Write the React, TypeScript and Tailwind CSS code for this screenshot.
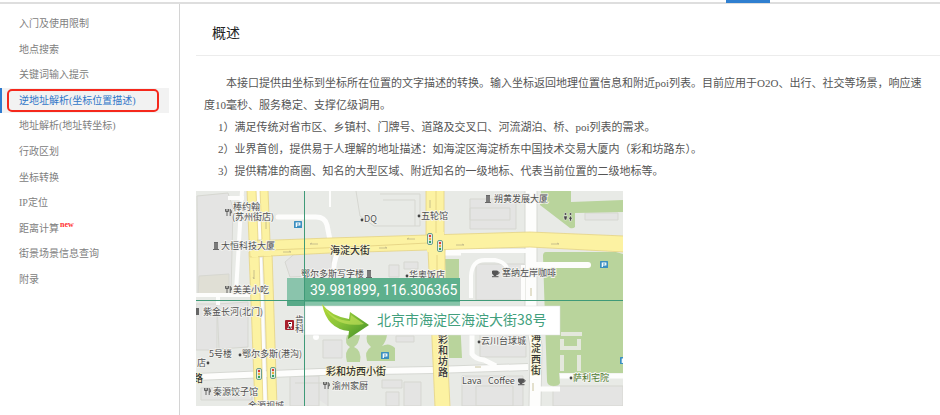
type NavItem = { label: string; isNew?: boolean };

const navItems: NavItem[] = [
  { label: "入门及使用限制" },
  { label: "地点搜索" },
  { label: "关键词输入提示" },
  { label: "逆地址解析(坐标位置描述)" },
  { label: "地址解析(地址转坐标)" },
  { label: "行政区划" },
  { label: "坐标转换" },
  { label: "IP定位" },
  { label: "距离计算", isNew: true },
  { label: "街景场景信息查询" },
  { label: "附录" },
];

const activeLabel = "逆地址解析(坐标位置描述)";

function Sidebar() {
  return (
    <nav aria-label="目录" className="w-[180px] shrink-0 border-r border-[#d4d4d4] pt-[7px]">
      <ul className="grid h-[281px] auto-rows-fr text-[10px] text-[#808080]">
        {navItems.map((item) =>
          item.label === activeLabel ? (
            <li key={item.label} className="relative mr-2.5 flex border-l-2 border-[#2f7bd0] bg-[#f2f2f2]">
              <a href="#geocoder" aria-current="page" className="flex flex-1 items-center pl-[17px] text-[#2f76c8]">
                {item.label}
              </a>
              <span className="pointer-events-none absolute inset-y-px left-[5px] right-2.5 rounded-[5px] border-2 border-[#f5281c]" />
            </li>
          ) : (
            <li key={item.label} className="flex">
              <a href="#section" className="flex flex-1 items-center pl-[19px]">
                {item.label}
                {item.isNew && (
                  <sup className="top-0 mb-1.5 ml-px text-[8px] font-bold leading-none text-[#ff3030]">new</sup>
                )}
              </a>
            </li>
          ),
        )}
      </ul>
    </nav>
  );
}

type MapLabel = [text: string, x: number, y: number];

const placeLabels: MapLabel[] = [
  ["棒约翰", 233, 210],
  ["(苏州街店)", 232, 220],
  ["大恒科技大厦", 221, 249],
  ["美美小吃", 233, 293],
  ["DQ", 364, 222],
  ["五轮馆", 421, 219],
  ["朔黄发展大厦", 494, 202],
  ["塞纳左岸咖啡", 502, 276],
  ["鄂尔多斯写字楼", 301, 277],
  ["华奥饭店", 409, 278],
  ["紫金长河(北门)", 203, 315],
  ["肯", 295, 323],
  ["科", 295, 332],
  ["5号楼", 209, 357],
  ["鄂尔多斯(港沟)", 242, 357],
  ["店", 197, 366],
  ["秦源饺子馆", 213, 395],
  ["金源视城", 248, 409],
  ["渝州家厨", 332, 389],
  ["云川台球城", 481, 344],
  ["Lava", 462, 384],
  ["Coffee", 488, 384],
];

const placeDots: [number, number][] = [
  [362, 220],
  [419, 216],
  [407, 276],
  [240, 355],
  [208, 363],
  [479, 342],
  [571, 378],
];

const verticalStreets: { chars: string; x: number; y: number; step: number }[] = [
  { chars: "彩和坊路", x: 438, y: 343, step: 11 },
  { chars: "海淀西街", x: 531, y: 341, step: 11 },
];

function Parking({ x, y }: { x: number; y: number }) {
  return (
    <g transform={`translate(${x} ${y})`}>
      <rect width="8" height="7" rx="0.5" fill="#3a8fc0" />
      <path d="M2.3 6V2h3.5v2H2.5" fill="none" stroke="#fff" strokeWidth="1.2" />
    </g>
  );
}

function TrafficLight({ x, y }: { x: number; y: number }) {
  return (
    <g transform={`translate(${x} ${y})`}>
      <rect x="0.5" y="0.5" width="5" height="11" rx="1.5" fill="#eef3ef" stroke="#6fa08c" />
      <circle cx="3" cy="3" r="1.2" fill="#d93a30" />
      <circle cx="3" cy="6" r="1.2" fill="#e8b23a" />
      <circle cx="3" cy="9" r="1.2" fill="#2fa05a" />
    </g>
  );
}

function Fork({ x, y }: { x: number; y: number }) {
  return (
    <path
      transform={`translate(${x} ${y})`}
      d="M0.5 0v2.5h3V0M2 0v7M5.2 7V0.4Q6.8 1.5 6.3 4H5.2"
      fill="none"
      stroke="#555"
      strokeWidth="0.9"
    />
  );
}

function Tower({ x, y }: { x: number; y: number }) {
  return (
    <g transform={`translate(${x} ${y})`}>
      <path d="M1 0h4v7h1v1H0V7h1z" fill="#666" />
      <path d="M1 2h4M1 4h4M1 6h4" stroke="#bbb" strokeWidth="0.5" />
    </g>
  );
}

function Cup({ x, y }: { x: number; y: number }) {
  return (
    <g transform={`translate(${x} ${y})`} fill="none" stroke="#555">
      <path d="M0.5 0h5v2.5L4 4.5H2L0.5 2.5z" fill="#555" />
      <path d="M5.5 1H7v1.5L5 3.5M0 5.7h6.5" />
    </g>
  );
}

function LocationMap() {
  return (
    <svg
      role="img"
      aria-label="北京市海淀区海淀大街38号"
      viewBox="196 191 427 215"
      className="block aspect-[427/215] w-full max-w-[427px]"
      fontFamily="'Noto Sans CJK SC', sans-serif"
    >
      <rect x="196" y="191" width="427" height="215" fill="#e8eae6" />

      {/* building blocks */}
      <g fill="#e4e4e3" stroke="#d6d7d1" strokeWidth="1">
        <path d="M197 196l31-3 5 15-2 86-33 2z" />
        <path d="M199 276l30-2v19l-31 3z" fill="#e0dfd5" />
        <path d="M217 304l31-2v45l-29 2zM196 304h21v46h-21zM201 388h51v12h-51z" />
        <path d="M356 191l4 25 14 10h46v-32H380M383 200h32v26" fill="none" />
        <path d="M470 199h46v30h-46zM470 208h40v12h-40zM585 213h33v7h-33z" />
        <path d="M285 262l14-12h33v25l-42 2zM389 265h10v12h-10zM404 262h14v7h-14z" />
        <path d="M323 340h19v18h-19zM290 376h29v30h-29zM295 383h33v23M382 380h20v8h-20zM404 382h17v24h-17zM386 392h13v14h-13z" />
        <path d="M396 336h18v6h-18zM462 376h61v30h-61zM476 386h37v20h-37zM480 320h46v37h-46zM553 386h70v20h-70zM476 264h48v36h-48z" />
      </g>

      {/* parks */}
      <g fill="#b9d49c">
        <path d="M541 191h30v11l52-2v12l-48 1v14q-2 2-5 1l-30-23z" />
        <path d="M546 252h70l7 2v119h-64l1 10q-1 3-6 3-7 0-7-5l-4-125q0-4 3-4z" />
        <path d="M445 259h14v41l3 58h-13z" />
        <path d="M347 335h13q-1 9-6 12 8 3 6 15h-13q-3-11 3-15-6-3-3-12z" />
        <path d="M367 335h20q-1 7-5 11 7-4 13 2v13h-28q-3-10 4-14-6-5-4-12z" />
      </g>

      {/* minor roads */}
      <g fill="none" stroke="#d6d8d3">
        <path d="M196 377L320 372 433 370 528 367" strokeWidth="8" />
        <path d="M531 191v125l5 30-1 60" strokeWidth="13" />
      </g>
      <g fill="none" stroke="#fdfdfc">
        <path d="M196 377L320 372 433 370 528 367" strokeWidth="6" />
        <path d="M531 191v125l5 30-1 60" strokeWidth="11" />
        <path d="M242 191l-6 101M228 198h16M196 295h54M218 295v10" strokeWidth="4" />
        <path d="M278 217h38q9 0 11 8l3 15" strokeWidth="5" strokeLinecap="round" />
        <path d="M340 248q-8 14-6 30" strokeWidth="5" />
        <path d="M330 191v16" strokeWidth="2" />
        <path d="M536 265h52" strokeWidth="6" strokeLinecap="round" />
        <path d="M446 251h84M471 298v-22q1-16 14-16h10q10 2 12 8M523 300v-35" strokeWidth="4" />
        <path d="M472 334v20q3 5 12 6l12 6M445 253h16" strokeWidth="5" />
        <path d="M442 191v42" strokeWidth="2" />
        <path d="M258 258l5 148M256 191l4 48" strokeWidth="8" />
        <path d="M560 376h63M540 389h20" strokeWidth="5" />
      </g>
      <path
        d="M561 334h21M562 339v9h17v-9M562 355v16M579 355v16"
        fill="none"
        stroke="#e4e8dc"
        strokeWidth="4"
      />
      <circle cx="316" cy="337" r="3" fill="#fff" />

      {/* main roads */}
      <g fill="#fcf2a2" stroke="#e4d384" strokeWidth="0.8">
        <path d="M247 190h9l2 50h-9zM249 252h10l4 155h-8l-4-105z" />
        <path d="M260 190h8l2 51h-8zM263 252h9l5 155h-9l-3-105z" />
        <path d="M426 190h18v45h-18zM428 249h17v52l5 106h-15z" />
        <path d="M249 241L330 238 428 235 530 232 624 236V252L530 247 428 250 330 253 250 257z" />
      </g>
      <g fill="#fcf2a2">
        <path d="M250 239h7v6h-7zM262 239h7v6h-7zM427 232h17v20h-17zM252 251h6v6h-6zM264 250h7v6h-7z" />
      </g>
      <path d="M269 250l80-3 79-4M437 255v50M436 191v42" stroke="#e2cf80" strokeWidth="0.8" fill="none" />
      <g stroke="#bdb487" strokeWidth="0.8" fill="none">
        <path d="M310 244h8m-8 0l2-1M283 252h8m0 0l-2-1M407 239h8m-8 0l2-1M379 248h8m0 0l-2-1M456 245h8m0 0l-2-1M551 244h8m0 0l-2-1M254 270v9m0 0l-1-2M266 220v9M430 200v8M531 288v8M533 383v8M475 367h6" />
      </g>

      {/* points of interest */}
      <g fontSize="9" fill="#505050" stroke="#f4f4f1" strokeWidth="1.6" paintOrder="stroke">
        {placeLabels.map(([text, x, y]) => (
          <text key={text} x={x} y={y}>
            {text}
          </text>
        ))}
        <text x="573" y="381" fill="#4d7a2e">
          萨利宅院
        </text>
      </g>
      <g fill="#444">
        {placeDots.map(([x, y]) => (
          <circle key={`${x}-${y}`} cx={x} cy={y} r="1.4" />
        ))}
      </g>
      <g fontSize="10" fontWeight="500" fill="#333" stroke="#f8f4d0" strokeWidth="1.4" paintOrder="stroke">
        <text x="330" y="254">
          海淀大街
        </text>
        <text x="326" y="375">
          彩和坊西小街
        </text>
        <text x="193" y="382">
          路
        </text>
        {verticalStreets.map(({ chars, x, y, step }) =>
          [...chars].map((char, index) => (
            <text key={`${chars}-${char}`} x={x} y={y + index * step}>
              {char}
            </text>
          )),
        )}
      </g>
      <Parking x={294} y={221} />
      <Parking x={381} y={352} />
      <Parking x={600} y={261} />
      <Parking x={620} y={357} />
      <TrafficLight x={427} y={233} />
      <TrafficLight x={437} y={240} />
      <TrafficLight x={256} y={368} />
      <TrafficLight x={270} y={367} />
      <Fork x={225} y={209} />
      <Fork x={225} y={286} />
      <Fork x={204} y={388} />
      <Fork x={323} y={382} />
      <Tower x={213} y={242} />
      <Tower x={485} y={195} />
      <Tower x={366} y={270} />
      <Cup x={492} y={271} />
      <Cup x={518} y={379} />
      <path d="M196 308h3v7h-3" fill="#666" />
      <g fill="#444" stroke="#fff" strokeWidth="0.5">
        <circle cx="565.5" cy="214" r="1.3" />
        <circle cx="570.5" cy="214" r="1.3" />
        <path d="M563.5 216h4l-1 4h-2zM570.5 215.5l2 3.5h-1v2h-2v-2h-1z" />
      </g>
      <rect x="285" y="320" width="9" height="10" rx="1" fill="#a8202c" />
      <path d="M288 322h4v4l-1 1 1 2h-5l2-3z" fill="#fff" />
      <path d="M289 323h2v1h-2zM288 328l2-2 1 3z" fill="#222" />

      {/* selected coordinate */}
      <rect x="287" y="278" width="18" height="28" fill="#7fc0a5" fillOpacity="0.9" />
      <rect x="287" y="301" width="18" height="5" fill="#58aa88" />
      <rect x="305" y="278" width="155" height="28" fill="#5eb08d" />
      <rect x="305" y="302" width="155" height="4" fill="#86c4a9" />
      <path d="M304.5 191v215M196 300.5h427" stroke="#3f9a78" strokeWidth="1" />
      <rect x="305" y="306" width="255" height="29" fill="#fff" stroke="#dedede" strokeWidth="0.5" />
      <text x="310" y="295" fontSize="14" fill="#fff" fontFamily="Roboto, sans-serif">
        39.981899, 116.306365
      </text>
      <text x="377" y="325" fontSize="14" fill="#429f7d">
        北京市海淀区海淀大街38号
      </text>
      <defs>
        <linearGradient id="arrow" x1="0" y1="0" x2="1" y2="1">
          <stop offset="0" stopColor="#b5d936" />
          <stop offset="0.45" stopColor="#8bc53a" />
          <stop offset="1" stopColor="#3d8c25" />
        </linearGradient>
      </defs>
      <path d="M322 304q9 12 27 15l1-7 19 13-21 14 1-8q-22-2-27-27z" fill="url(#arrow)" />
      <path d="M323 305q9 15 27 16l1-6 13 9q-29 5-41-19z" fill="#c5e45b" fillOpacity="0.65" />
    </svg>
  );
}

export default function App() {
  return (
    <div className="bg-white font-['Liberation_Serif','Noto_Sans_CJK_SC',serif]">
      <header className="flex h-1 justify-end border-b-2 border-[#dedede] pr-[170px]">
        <span className="h-[3px] w-11 bg-[#2f7fd0]" />
      </header>
      <div className="flex min-h-[411px] items-stretch">
        <Sidebar />
        <main className="min-w-0 flex-1 pl-4">
          <h1 className="flex h-[52px] items-center border-b border-[#ececec] pb-1 pl-4 pt-3 text-[14px] text-[#222]">
            概述
          </h1>
          <div className="pb-[9px] pl-2 pr-4 pt-4 text-[11px] leading-[22px] text-[#555]">
            <p className="indent-[22px]">
              本接口提供由坐标到坐标所在位置的文字描述的转换。输入坐标返回地理位置信息和附近poi列表。目前应用于O2O、出行、社交等场景，响应速度10毫秒、服务稳定、支撑亿级调用。
            </p>
            <div className="pl-3.5">
              <p>1）满足传统对省市区、乡镇村、门牌号、道路及交叉口、河流湖泊、桥、poi列表的需求。</p>
              <p>2）业界首创，提供易于人理解的地址描述：如海淀区海淀桥东中国技术交易大厦内（彩和坊路东）。</p>
              <p>3）提供精准的商圈、知名的大型区域、附近知名的一级地标、代表当前位置的二级地标等。</p>
            </div>
          </div>
          <LocationMap />
        </main>
      </div>
    </div>
  );
}
